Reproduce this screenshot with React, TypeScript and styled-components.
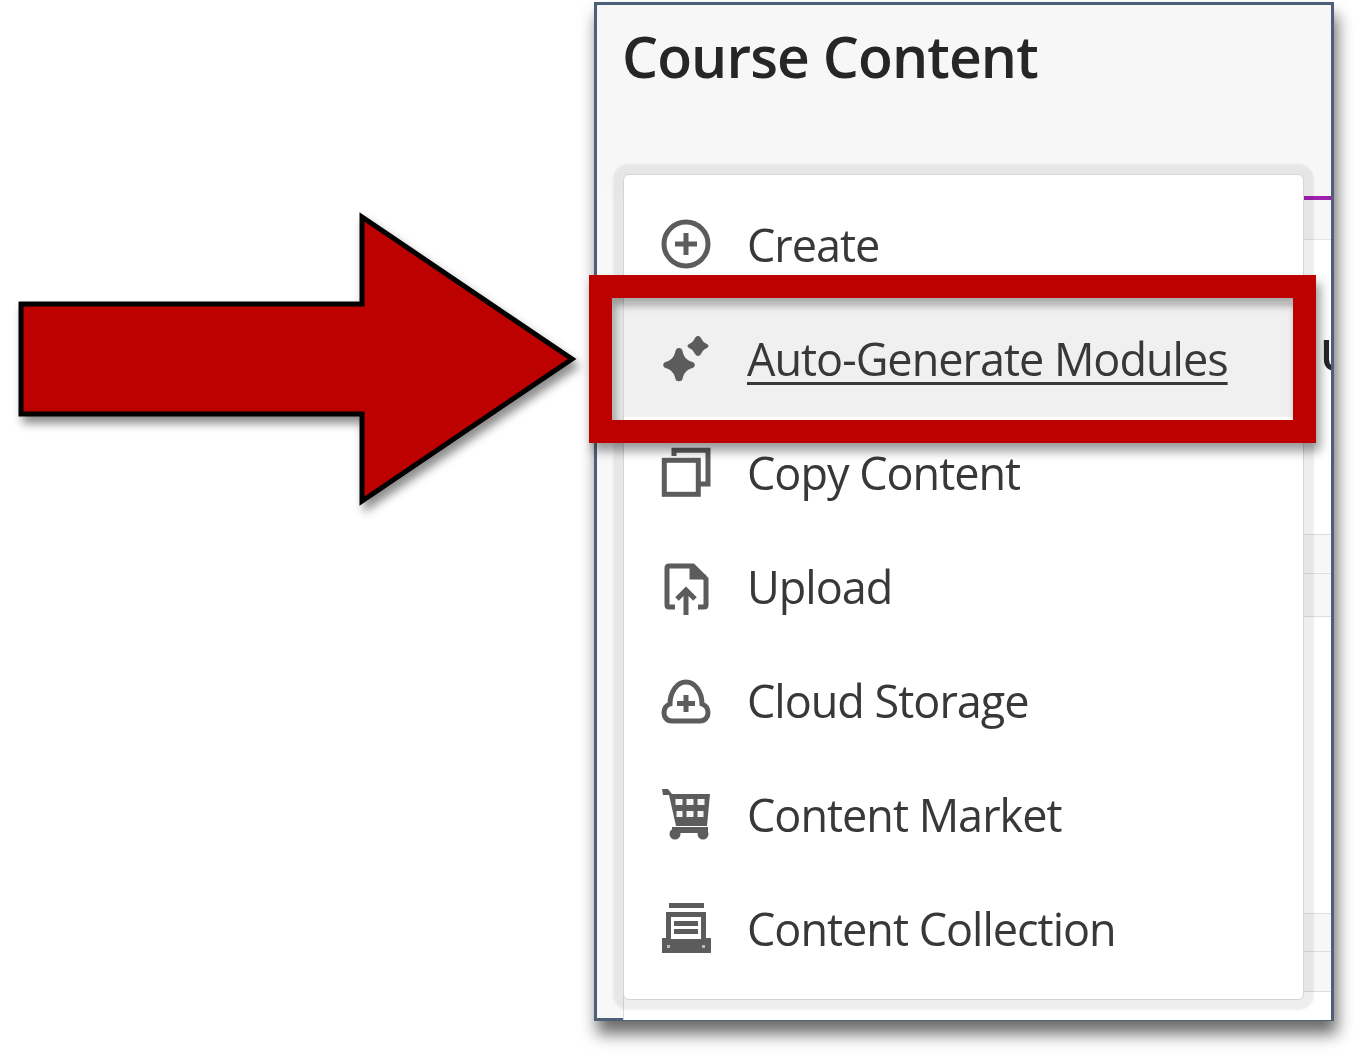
import React from "react";
import styled, { createGlobalStyle } from "styled-components";

const Global = createGlobalStyle`
  html, body { margin: 0; padding: 0; background: #fff; }
  body { font-family: "Open Sans", "Liberation Sans", sans-serif; }
`;

const Page = styled.main`
  width: 1353px;
  height: 1058px;
  overflow: hidden;
  display: flex;
  padding-top: 2px;
  box-sizing: border-box;
  background: #fff;
`;

const ArrowColumn = styled.div`
  width: 594px;
  flex: none;
  padding: 209px 0 0 16px;
  box-sizing: border-box;
`;

const ArrowSvg = styled.svg`
  display: block;
  overflow: visible;
  filter: drop-shadow(4px 7px 5px rgba(0, 0, 0, 0.45));
`;

const Window = styled.section`
  position: relative;
  width: 740px;
  height: 1019px;
  flex: none;
  box-sizing: border-box;
  border: 3px solid #4e6078;
  background: #f8f8f8;
  box-shadow: 3px 13px 15px rgba(0, 0, 0, 0.58);
  display: flex;
  flex-direction: column;
`;

const Header = styled.header`
  height: 192px;
  flex: none;
  background: #f7f7f7;
  padding: 20px 0 0 25px;
  box-sizing: border-box;
`;

const Title = styled.h1`
  margin: 0;
  font-size: 57px;
  line-height: 62px;
  font-weight: 600;
  color: #262626;
  letter-spacing: -0.9px;
  filter: blur(0.6px);
`;

const Backdrop = styled.div`
  flex: 1;
  margin-left: 26px;
  background: #fff;
  border-left: 1px solid #dcdcdc;
  display: flex;
  flex-direction: column;
`;

const TabLine = styled.div`
  height: 4px;
  flex: none;
  margin-top: -1px;
  background: #a020b0;
`;

const TabBand = styled.div`
  height: 39px;
  flex: none;
  background: #f7f7f7;
  border-bottom: 1px solid #e4e4e4;
`;

const SectionHeading = styled.div`
  height: 294px;
  flex: none;
  overflow: hidden;
  padding: 84px 0 0 696px;
  box-sizing: border-box;
  font-size: 44px;
  line-height: 60px;
  font-weight: 600;
  color: #262626;
  white-space: nowrap;
  filter: blur(0.5px);
`;

const StripeRow = styled.div<{ $h: number }>`
  height: ${(p) => p.$h}px;
  flex: none;
  box-sizing: border-box;
  background: #f7f7f7;
  border-top: 1px solid #dedede;
`;

const Spacer = styled.div<{ $h: number }>`
  height: ${(p) => p.$h}px;
  flex: none;
  background: #fff;
  border-top: 1px solid #dedede;
`;

const Menu = styled.nav`
  position: absolute;
  left: 26px;
  top: 169px;
  width: 681px;
  height: 826px;
  box-sizing: border-box;
  padding: 14px 0;
  background: #fff;
  border-radius: 6px;
  border: 1px solid #d4d4d4;
  box-shadow: 0 0 2px 10px rgba(0, 0, 0, 0.065);
  display: flex;
  flex-direction: column;
`;

const Item = styled.a<{ $active?: boolean }>`
  height: 114px;
  flex: none;
  display: flex;
  align-items: center;
  gap: 36px;
  padding-left: 37px;
  background: ${(p) => (p.$active ? "#f0f0f0" : "transparent")};
  color: #383838;
  font-size: 45px;
  letter-spacing: -1px;
  text-decoration: none;
`;

const Label = styled.span<{ $active?: boolean }>`
  white-space: nowrap;
  position: relative;
  top: -2px;
  filter: blur(0.55px);
  text-decoration: ${(p) => (p.$active ? "underline" : "none")};
  text-decoration-thickness: 2.500px;
  text-underline-offset: 6px;
`;

const IconSvg = styled.svg`
  width: 50px;
  height: 60px;
  flex: none;
  display: block;
  overflow: visible;
  filter: blur(0.7px);
`;

const Highlight = styled.div`
  position: absolute;
  left: -8px;
  top: 270px;
  width: 727px;
  height: 168px;
  box-sizing: border-box;
  border: 23px solid #bd0000;
  box-shadow: 4px 8px 10px rgba(0, 0, 0, 0.4), inset 3px 7px 9px rgba(0, 0, 0, 0.35);
`;

const ic = "#5c5c5c";

const PlusIcon = () => (
  <IconSvg viewBox="0 0 50 60" fill="none" stroke={ic}>
    <circle cx="25" cy="28" r="22" strokeWidth="5" />
    <path d="M25 17v22M14 28h22" strokeWidth="5" />
  </IconSvg>
);

const SparkleIcon = () => (
  <IconSvg viewBox="0 0 50 60" fill={ic}>
    <path d="M18 18c2 0 3 1 3.500 3 1 5 3.500 9 10 11 3 1 3 5 0 6-6.500 2-9 6-10 11-.5 3-6.500 3-7 0-1-5-3.500-9-10-11-3-1-3-5 0-6 6.500-2 9-6 10-11 .5-2 1.500-3 3.500-3z" />
    <path d="M37 6c1 0 2 .5 3 2 1.500 3 3 5 6 6 2 1 2 3 0 4-3 1-4.500 3-6 6-1.500 2.500-4.500 2.500-6 0-1.500-3-3-5-6-6-2-1-2-3 0-4 3-1 4.500-3 6-6 1-1.500 2-2 3-2z" />
  </IconSvg>
);

const CopyIcon = () => (
  <IconSvg viewBox="0 0 50 60" fill="none" stroke={ic} strokeWidth="5">
    <path d="M13 12V6.300h34V40h-8" />
    <rect x="3.300" y="16.300" width="34" height="34" />
  </IconSvg>
);

const UploadIcon = () => (
  <IconSvg viewBox="0 0 50 60" fill="none" stroke={ic} strokeWidth="5">
    <path d="M14 49H8q-2 0-2-2V10q0-2 2-2h24l13 13v26q0 2-2 2h-6" />
    <path d="M31 8v11h14" fill={ic} />
    <path d="M25 57V32M16 41l9-9 9 9" />
  </IconSvg>
);

const CloudIcon = () => (
  <IconSvg viewBox="0 0 50 60" fill="none" stroke={ic} strokeWidth="5">
    <path d="M11 49C5 49 3 44 3 41c0-5 3-8 6-9 0-7 2-12 5-16 3-4 7-6 11-6s8 2 11 6c3 4 5 9 5 16 3 1 6 4 6 9 0 4-3 8-8 8z" />
    <path d="M25 23v17M16 31.500h18" strokeWidth="5" />
  </IconSvg>
);

const CartIcon = () => (
  <IconSvg viewBox="0 0 50 60">
    <path d="M1 3h6l4 5h38l-3 32H15L8 9H2z" fill={ic} />
    <path d="M14.500 13h7v6h-7zM25.500 13h7v6h-7zM36.500 13h7v6h-7zM15.500 25h6v6h-6zM25.500 25h7v6h-7zM36.500 25h6v6h-6z" fill="#f4f4f4" />
    <rect x="11" y="41" width="36" height="6" fill={ic} />
    <circle cx="14" cy="48" r="5.500" fill={ic} />
    <circle cx="42" cy="48" r="5.500" fill={ic} />
  </IconSvg>
);

const CollectionIcon = () => (
  <IconSvg viewBox="0 0 50 60">
    <rect x="8" y="3" width="35" height="5" fill={ic} />
    <path d="M5 12h40v26h5v15H1V38h4z" fill={ic} />
    <rect x="10" y="17" width="30" height="22" fill="#fff" />
    <path d="M13 21h24v5H13zM13 29h24v5H13z" fill={ic} />
    <rect x="6" y="45" width="3" height="3" fill="#bbb" />
    <rect x="41" y="45" width="3" height="3" fill="#bbb" />
  </IconSvg>
);

const items = [
  { label: "Create", Icon: PlusIcon },
  { label: "Auto-Generate Modules", Icon: SparkleIcon, active: true },
  { label: "Copy Content", Icon: CopyIcon },
  { label: "Upload", Icon: UploadIcon },
  { label: "Cloud Storage", Icon: CloudIcon },
  { label: "Content Market", Icon: CartIcon },
  { label: "Content Collection", Icon: CollectionIcon },
];

export default function App() {
  return (
    <>
      <Global />
      <Page>
        <ArrowColumn>
          <ArrowSvg width="562" height="296" viewBox="0 0 562 296">
            <path
              d="M5 93H346V6L556 148 346 290V203H5z"
              fill="#bd0000"
              stroke="#000"
              strokeWidth="5"
            />
          </ArrowSvg>
        </ArrowColumn>
        <Window>
          <Header>
            <Title>Course Content</Title>
          </Header>
          <Backdrop>
            <TabLine />
            <TabBand />
            <SectionHeading>U</SectionHeading>
            <StripeRow $h={39} />
            <StripeRow $h={43} />
            <Spacer $h={296} />
            <StripeRow $h={38} />
            <StripeRow $h={40} />
            <Spacer $h={28} />
          </Backdrop>
          <Menu>
            {items.map(({ label, Icon, active }) => (
              <Item key={label} href="#" $active={active}>
                <Icon />
                <Label $active={active}>{label}</Label>
              </Item>
            ))}
          </Menu>
          <Highlight />
        </Window>
      </Page>
    </>
  );
}
